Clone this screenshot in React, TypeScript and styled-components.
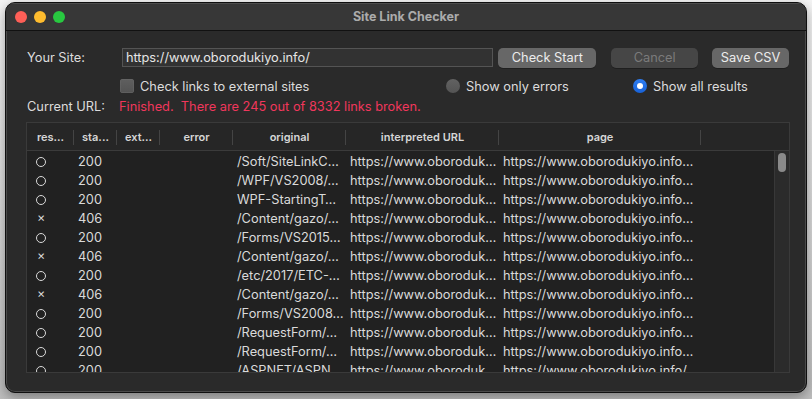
import React from "react";
import styled, { createGlobalStyle } from "styled-components";

const Global = createGlobalStyle`
  html, body { margin: 0; padding: 0; }
  body {
    width: 812px; height: 399px; overflow: hidden;
    background: linear-gradient(#f4f4f4, #d4d4d4 60%, #bdbdbd);
    font-family: Inter, "Liberation Sans", Arial, sans-serif;
  }
`;

const FS = "12.8px";

const Stage = styled.div`
  padding: 2px 5px 0 5px;
`;

const Window = styled.div`
  width: 802px;
  height: 391px;
  box-sizing: border-box;
  border-radius: 10px;
  background: #2a2a2a;
  border: 1px solid #0f0f0f;
  box-shadow: inset 0 0 0 1px #4a4a4a, 0 4px 12px rgba(0,0,0,0.35);
  overflow: hidden;
  display: flex;
  flex-direction: column;
`;

const TitleBar = styled.div`
  height: 28px;
  background: #373737;
  border-bottom: 1px solid #111;
  box-shadow: inset 0 1px 0 #4d4d4d;
  display: flex;
  align-items: center;
  position: relative;
  padding-left: 9px;
  gap: 7px;
`;

const Light = styled.span<{ $c: string }>`
  width: 12px; height: 12px; border-radius: 50%;
  background: ${p => p.$c};
`;

const Title = styled.div`
  position: absolute;
  left: 0; right: 0; top: 0; bottom: 0;
  display: flex; align-items: center; justify-content: center;
  font-weight: 700;
  font-size: 12.5px;
  color: #ababab;
  pointer-events: none;
`;

const Content = styled.div`
  flex: 1;
  padding: 16px 17px 19px 20px;
  display: flex;
  flex-direction: column;
`;

const Row1 = styled.div`
  display: flex;
  align-items: center;
  height: 21px;
`;

const Label = styled.div<{ $w: number }>`
  width: ${p => p.$w}px;
  font-size: ${FS};
  color: #dcdcdc;
  padding-left: 1px;
`;

const Input = styled.div`
  width: 372px;
  height: 19px;
  box-sizing: border-box;
  background: #323232;
  border: 1px solid #545454;
  font-size: ${FS};
  color: #e6e6e6;
  padding-left: 3px;
  line-height: 17px;
`;

const Btn = styled.div<{ $w: number; $ml: number; $disabled?: boolean }>`
  width: ${p => p.$w}px;
  margin-left: ${p => p.$ml}px;
  height: 20px;
  border-radius: 5px;
  background: ${p => (p.$disabled ? "#464646" : "#676767")};
  color: ${p => (p.$disabled ? "#7b7b7b" : "#ececec")};
  font-size: ${FS};
  display: flex; align-items: center; justify-content: center;
  box-shadow: 0 1px 0 rgba(0,0,0,0.25);
`;

const Row2 = styled.div`
  display: flex;
  align-items: center;
  height: 16px;
  margin-top: 10px;
  padding-left: 94px;
`;

const Option = styled.div<{ $w: number }>`
  width: ${p => p.$w}px;
  display: flex;
  align-items: center;
  gap: 6px;
  font-size: ${FS};
  color: #dcdcdc;
`;

const Check = styled.span`
  width: 14px; height: 14px; border-radius: 3px;
  background: linear-gradient(#5f5f5f, #535353);
  box-shadow: inset 0 0 0 0.5px #6a6a6a;
`;

const Radio = styled.span<{ $on?: boolean }>`
  width: 14px; height: 14px; border-radius: 50%;
  box-sizing: border-box;
  display: flex; align-items: center; justify-content: center;
  background: ${p => (p.$on ? "linear-gradient(#2f7ef2, #1862d8)" : "linear-gradient(#626262, #545454)")};
  &::after {
    content: "";
    width: 6px; height: 6px; border-radius: 50%;
    background: #fff;
    display: ${p => (p.$on ? "block" : "none")};
  }
`;

const Row3 = styled.div`
  display: flex;
  align-items: center;
  height: 16px;
  margin-top: 4px;
`;

const Status = styled.div`
  font-size: ${FS};
  color: #f0375c;
  white-space: pre;
`;

const Table = styled.div`
  margin-top: 8px;
  width: 764px;
  height: 251px;
  box-sizing: border-box;
  border: 1px solid #3a3a3a;
  background: #212121;
  display: flex;
  flex-direction: column;
  overflow: hidden;
`;

const Header = styled.div`
  height: 27px;
  flex: none;
  display: flex;
  background: #262626;
  border-bottom: 1px solid #3b3b3b;
`;

const HeadCell = styled.div<{ $w: number; $last?: boolean }>`
  width: ${p => p.$w}px;
  flex: none;
  position: relative;
  display: flex; align-items: center; justify-content: center;
  font-size: 11px;
  font-weight: 600;
  color: #d6d6d6;
  &::after {
    content: "";
    position: absolute;
    right: 0; top: 7px; bottom: 5px;
    width: 1px;
    background: #444;
    display: ${p => (p.$last ? "none" : "block")};
  }
`;

const BodyWrap = styled.div`
  flex: 1;
  display: flex;
  min-height: 0;
`;

const Body = styled.div`
  flex: 1;
  overflow: hidden;
  padding-top: 1px;
`;

const Row = styled.div`
  height: 19px;
  display: flex;
  align-items: center;
`;

const Cell = styled.div<{ $w: number }>`
  width: ${p => p.$w}px;
  flex: none;
  box-sizing: border-box;
  padding-left: 4px;
  font-size: ${FS};
  color: #dadada;
  white-space: nowrap;
  overflow: hidden;
`;

const IconCell = styled.div`
  width: 47px;
  flex: none;
  padding-left: 9px;
  box-sizing: border-box;
  display: flex;
  align-items: center;
`;

const Circle = styled.span`
  width: 10px; height: 10px;
  box-sizing: border-box;
  border: 1.6px solid #dadada;
  border-radius: 50%;
`;

const Cross = styled.span`
  font-size: 12.5px;
  color: #dadada;
  line-height: 1;
  padding-left: 1px;
`;

const ScrollTrack = styled.div`
  width: 14px;
  flex: none;
  background: #2b2b2b;
  border-left: 1px solid #383838;
  padding-top: 2px;
  display: flex;
  justify-content: center;
`;

const Thumb = styled.div`
  width: 8px;
  height: 19px;
  border-radius: 4px;
  background: #8a8a8a;
`;

const cols = [
  { t: "res...", w: 47 },
  { t: "sta...", w: 43 },
  { t: "ext...", w: 43 },
  { t: "error", w: 73 },
  { t: "original", w: 113 },
  { t: "interpreted URL", w: 153 },
  { t: "page", w: 202 },
  { t: "", w: 88 },
];

const rows: [boolean, string, string, string, string][] = [
  [true, "200", "/Soft/SiteLinkC…", "https://www.oboroduk…", "https://www.oborodukiyo.info…"],
  [true, "200", "/WPF/VS2008/…", "https://www.oboroduk…", "https://www.oborodukiyo.info…"],
  [true, "200", "WPF-StartingT…", "https://www.oboroduk…", "https://www.oborodukiyo.info…"],
  [false, "406", "/Content/gazo/…", "https://www.oboroduk…", "https://www.oborodukiyo.info…"],
  [true, "200", "/Forms/VS2015…", "https://www.oboroduk…", "https://www.oborodukiyo.info…"],
  [false, "406", "/Content/gazo/…", "https://www.oboroduk…", "https://www.oborodukiyo.info…"],
  [true, "200", "/etc/2017/ETC-…", "https://www.oboroduk…", "https://www.oborodukiyo.info…"],
  [false, "406", "/Content/gazo/…", "https://www.oboroduk…", "https://www.oborodukiyo.info…"],
  [true, "200", "/Forms/VS2008…", "https://www.oboroduk…", "https://www.oborodukiyo.info…"],
  [true, "200", "/RequestForm/…", "https://www.oboroduk…", "https://www.oborodukiyo.info…"],
  [true, "200", "/RequestForm/…", "https://www.oboroduk…", "https://www.oborodukiyo.info…"],
  [true, "200", "/ASPNET/ASPN…", "https://www.oboroduk…", "https://www.oborodukiyo.info/"],
];

export default function App() {
  return (
    <>
      <Global />
      <Stage>
        <Window>
          <TitleBar>
            <Light $c="#fe5f57" />
            <Light $c="#febc2e" />
            <Light $c="#28c840" />
            <Title>Site Link Checker</Title>
          </TitleBar>
          <Content>
            <Row1>
              <Label $w={95}>Your Site:</Label>
              <Input>https://www.oborodukiyo.info/</Input>
              <Btn $w={98} $ml={5}>Check Start</Btn>
              <Btn $w={87} $ml={15} $disabled>Cancel</Btn>
              <Btn $w={77} $ml={14}>Save CSV</Btn>
            </Row1>
            <Row2>
              <Option $w={326}><Check />Check links to external sites</Option>
              <Option $w={187}><Radio />Show only errors</Option>
              <Option $w={130}><Radio $on />Show all results</Option>
            </Row2>
            <Row3>
              <Label $w={92}>Current URL:</Label>
              <Status>Finished.  There are 245 out of 8332 links broken.</Status>
            </Row3>
            <Table>
              <Header>
                {cols.map((c, i) => (
                  <HeadCell key={i} $w={c.w} $last={i === cols.length - 1}>{c.t}</HeadCell>
                ))}
              </Header>
              <BodyWrap>
                <Body>
                  {rows.map((r, i) => (
                    <Row key={i}>
                      <IconCell>{r[0] ? <Circle /> : <Cross>×</Cross>}</IconCell>
                      <Cell $w={43}>{r[1]}</Cell>
                      <Cell $w={43} />
                      <Cell $w={73} />
                      <Cell $w={113}>{r[2]}</Cell>
                      <Cell $w={153}>{r[3]}</Cell>
                      <Cell $w={202}>{r[4]}</Cell>
                    </Row>
                  ))}
                </Body>
                <ScrollTrack><Thumb /></ScrollTrack>
              </BodyWrap>
            </Table>
          </Content>
        </Window>
      </Stage>
    </>
  );
}
